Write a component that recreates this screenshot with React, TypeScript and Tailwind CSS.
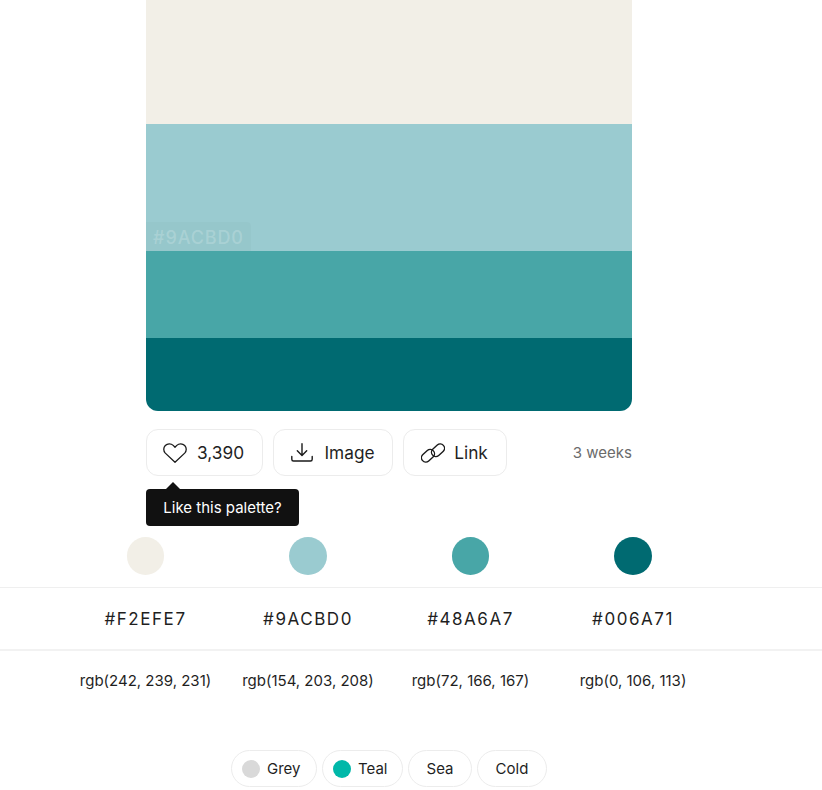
const colors = [
  { hex: "#F2EFE7", rgb: "rgb(242, 239, 231)", swatch: "bg-[#f2efe7]" },
  { hex: "#9ACBD0", rgb: "rgb(154, 203, 208)", swatch: "bg-[#9acbd0]" },
  { hex: "#48A6A7", rgb: "rgb(72, 166, 167)", swatch: "bg-[#48a6a7]" },
  { hex: "#006A71", rgb: "rgb(0, 106, 113)", swatch: "bg-[#006a71]" },
];

const HeartIcon = () => (
  <svg width="24" height="20" viewBox="0 0 24 20" fill="none" stroke="#1a1a1a" strokeWidth="1.3" strokeLinejoin="round">
    <path d="M12 19.200 2.300 10.100C.2 7.900.3 4.500 2.300 2.500 4.500.3 8 .3 10.200 2.400L12 4.200l1.800-1.800c2.200-2.100 5.700-2.100 7.900.1 2 2 2.100 5.400 0 7.600L12 19.200Z" />
  </svg>
);

const DownloadIcon = () => (
  <svg width="22" height="19" viewBox="0 0 22 19" fill="none" stroke="#1a1a1a" strokeWidth="1.4" strokeLinecap="round" strokeLinejoin="round">
    <path d="M11 .8v11.400M6.300 7.800l4.700 4.700 4.700-4.700" />
    <path d="M.8 13.500v2.700c0 1 .7 1.800 1.700 1.800h17c1 0 1.700-.8 1.700-1.800v-2.700" />
  </svg>
);

const LinkIcon = () => (
  <svg width="24" height="20" viewBox="0 0 24 20" fill="none" stroke="#1a1a1a" strokeWidth="1.4">
    <rect x="-0.250" y="8.450" width="14.500" height="8.600" rx="4.300" transform="rotate(-42 7 12.750)" />
    <rect x="9.750" y="2.950" width="14.500" height="8.600" rx="4.300" transform="rotate(-42 17 7.250)" />
  </svg>
);

const App = () => {
  return (
    <div className="w-[822px] h-[790px] overflow-hidden bg-white font-['Inter',sans-serif] text-[#1f1f1f]">
      <div className="w-[486px] ml-[146px]">
        {/* Palette */}
        <div className="h-[411px] rounded-b-xl overflow-hidden flex flex-col">
          <div className="h-[124px] bg-[#f2efe7]" />
          <div className="h-[127px] bg-[#9acbd0] flex items-end">
            <span className="h-[29px] pt-[1px] px-[7px] flex items-center rounded-tr bg-black/[0.02] text-[18px] font-medium tracking-[0.9px] text-white/20">
              #9ACBD0
            </span>
          </div>
          <div className="h-[87px] bg-[#48a6a7]" />
          <div className="h-[73px] bg-[#006a71]" />
        </div>

        {/* Actions */}
        <div className="relative mt-[18px] flex items-center gap-[10px]">
          <button className="h-[47px] w-[117px] pr-[2px] flex items-center justify-center gap-[10px] rounded-xl border border-[#ececec] text-[17.300px]">
            <HeartIcon />
            3,390
          </button>
          <button className="h-[47px] w-[120px] flex items-center justify-center gap-[11px] rounded-xl border border-[#ececec] text-[17.300px]">
            <DownloadIcon />
            Image
          </button>
          <button className="h-[47px] w-[104px] pr-[1px] flex items-center justify-center gap-[9px] rounded-xl border border-[#ececec] text-[17.300px]">
            <LinkIcon />
            Link
          </button>
          <span className="ml-auto pt-[1px] text-[15px] text-[#6b6b6b]">3 weeks</span>

          {/* Tooltip */}
          <div className="absolute left-0 top-[60px] h-[37px] w-[153px] pt-[1px] flex items-center justify-center rounded bg-[#111111] text-[15px] text-white">
            <span className="absolute -top-[7px] left-[20px] w-0 h-0 border-x-[7px] border-x-transparent border-b-[7px] border-b-[#111111]" />
            Like this palette?
          </div>
        </div>
      </div>

      {/* Color table */}
      <div className="mt-[61px]">
        <div className="ml-[64.250px] grid w-[650px] grid-cols-4 h-[50px] justify-items-center">
          {colors.map((c) => (
            <div key={c.hex} className={`w-[37.500px] h-[38px] rounded-full ${c.swatch}`} />
          ))}
        </div>
        <div className="h-[64px] pt-[3px] flex items-center border-t border-t-[#efefef] border-b-2 border-b-[#f2f2f2]">
          <div className="ml-[64.250px] grid w-[650px] grid-cols-4 text-center text-[17px] tracking-[1.550px]">
            {colors.map((c) => (
              <div key={c.hex}>{c.hex}</div>
            ))}
          </div>
        </div>
        <div className="h-[60px] flex items-center">
          <div className="ml-[64.250px] grid w-[650px] grid-cols-4 text-center text-[15px]">
            {colors.map((c) => (
              <div key={c.hex}>{c.rgb}</div>
            ))}
          </div>
        </div>
      </div>

      {/* Tags */}
      <div className="mt-[39px] ml-[231px] flex gap-[5px] text-[15px]">
        <div className="h-[37px] w-[86px] pl-[10px] pt-[1px] flex items-center gap-[7px] rounded-full border border-[#ececec]">
          <span className="w-[18px] h-[18px] -mt-[1px] rounded-full bg-[#d9d9d9]" />
          Grey
        </div>
        <div className="h-[37px] w-[81px] pl-[10px] pt-[1px] flex items-center gap-[7px] rounded-full border border-[#ececec]">
          <span className="w-[18px] h-[18px] -mt-[1px] rounded-full bg-[#00b8a9]" />
          Teal
        </div>
        <div className="h-[37px] w-[64px] pt-[1px] flex items-center justify-center rounded-full border border-[#ececec]">Sea</div>
        <div className="h-[37px] w-[70px] pt-[1px] flex items-center justify-center rounded-full border border-[#ececec]">Cold</div>
      </div>
    </div>
  );
};

export default App;
